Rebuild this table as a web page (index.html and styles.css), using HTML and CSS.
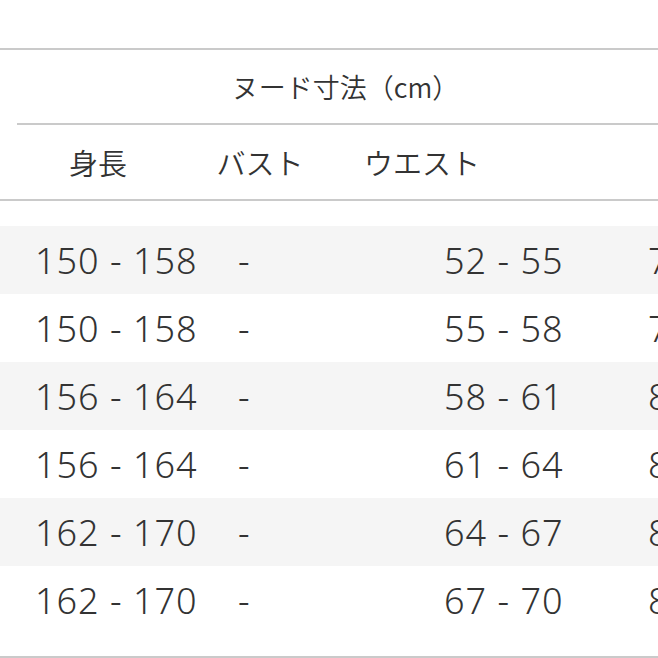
FILE: index.html
```html
<!DOCTYPE html>
<html lang="ja">
<head>
<meta charset="utf-8">
<link rel="stylesheet" href="styles.css">
</head>
<body>
<div class="sheet">
  <div class="rule rule-top"></div>
  <div class="head">
    <div class="title">ヌード寸法（cm）</div>
    <div class="rule"></div>
    <div class="heads">
      <div class="hcell">身長</div>
      <div class="hcell">バスト</div>
      <div class="hcell">ウエスト</div>
    </div>
  </div>
  <div class="rule"></div>
  <div class="body">
    <div class="row alt"><div class="cell">150 - 158</div><div class="cell">-</div><div class="cell">52 - 55</div><div class="cell">77 - 80</div></div>
    <div class="row"><div class="cell">150 - 158</div><div class="cell">-</div><div class="cell">55 - 58</div><div class="cell">79 - 82</div></div>
    <div class="row alt"><div class="cell">156 - 164</div><div class="cell">-</div><div class="cell">58 - 61</div><div class="cell">81 - 84</div></div>
    <div class="row"><div class="cell">156 - 164</div><div class="cell">-</div><div class="cell">61 - 64</div><div class="cell">83 - 86</div></div>
    <div class="row alt"><div class="cell">162 - 170</div><div class="cell">-</div><div class="cell">64 - 67</div><div class="cell">85 - 88</div></div>
    <div class="row"><div class="cell">162 - 170</div><div class="cell">-</div><div class="cell">67 - 70</div><div class="cell">87 - 90</div></div>
  </div>
  <div class="rule"></div>
</div>
</body>
</html>
```

FILE: styles.css
```css
html, body {
  margin: 0;
  padding: 0;
  background: #ffffff;
  overflow: hidden;
}
body {
  width: 658px;
  height: 658px;
  font-family: "Noto Sans", "Noto Sans CJK JP", sans-serif;
  color: #333333;
}
.sheet {
  width: 900px;
  padding-top: 48px;
}
.rule {
  height: 2px;
  background: #cacaca;
}
.head {
  margin-left: 17px;
}
.title {
  height: 73px;
  display: flex;
  align-items: center;
  justify-content: center;
  width: 657px;
  font-family: "Noto Sans CJK JP", sans-serif;
  font-size: 27px;
  font-weight: 350;
}
.heads {
  display: grid;
  grid-template-columns: repeat(3, 162px);
  height: 74px;
  align-items: center;
}
.hcell {
  text-align: center;
  font-family: "Noto Sans CJK JP", sans-serif;
  font-size: 29px;
  font-weight: 350;
}
.body {
  padding-top: 25px;
  padding-bottom: 22px;
}
.row {
  display: grid;
  grid-template-columns: 203px 206px 204px 204px;
  height: 68px;
  align-items: center;
}
.row.alt {
  background: #f5f5f5;
}
.cell {
  padding-left: 35px;
  font-size: 36px;
  font-weight: 300;
  letter-spacing: 1px;
  white-space: nowrap;
}
```
